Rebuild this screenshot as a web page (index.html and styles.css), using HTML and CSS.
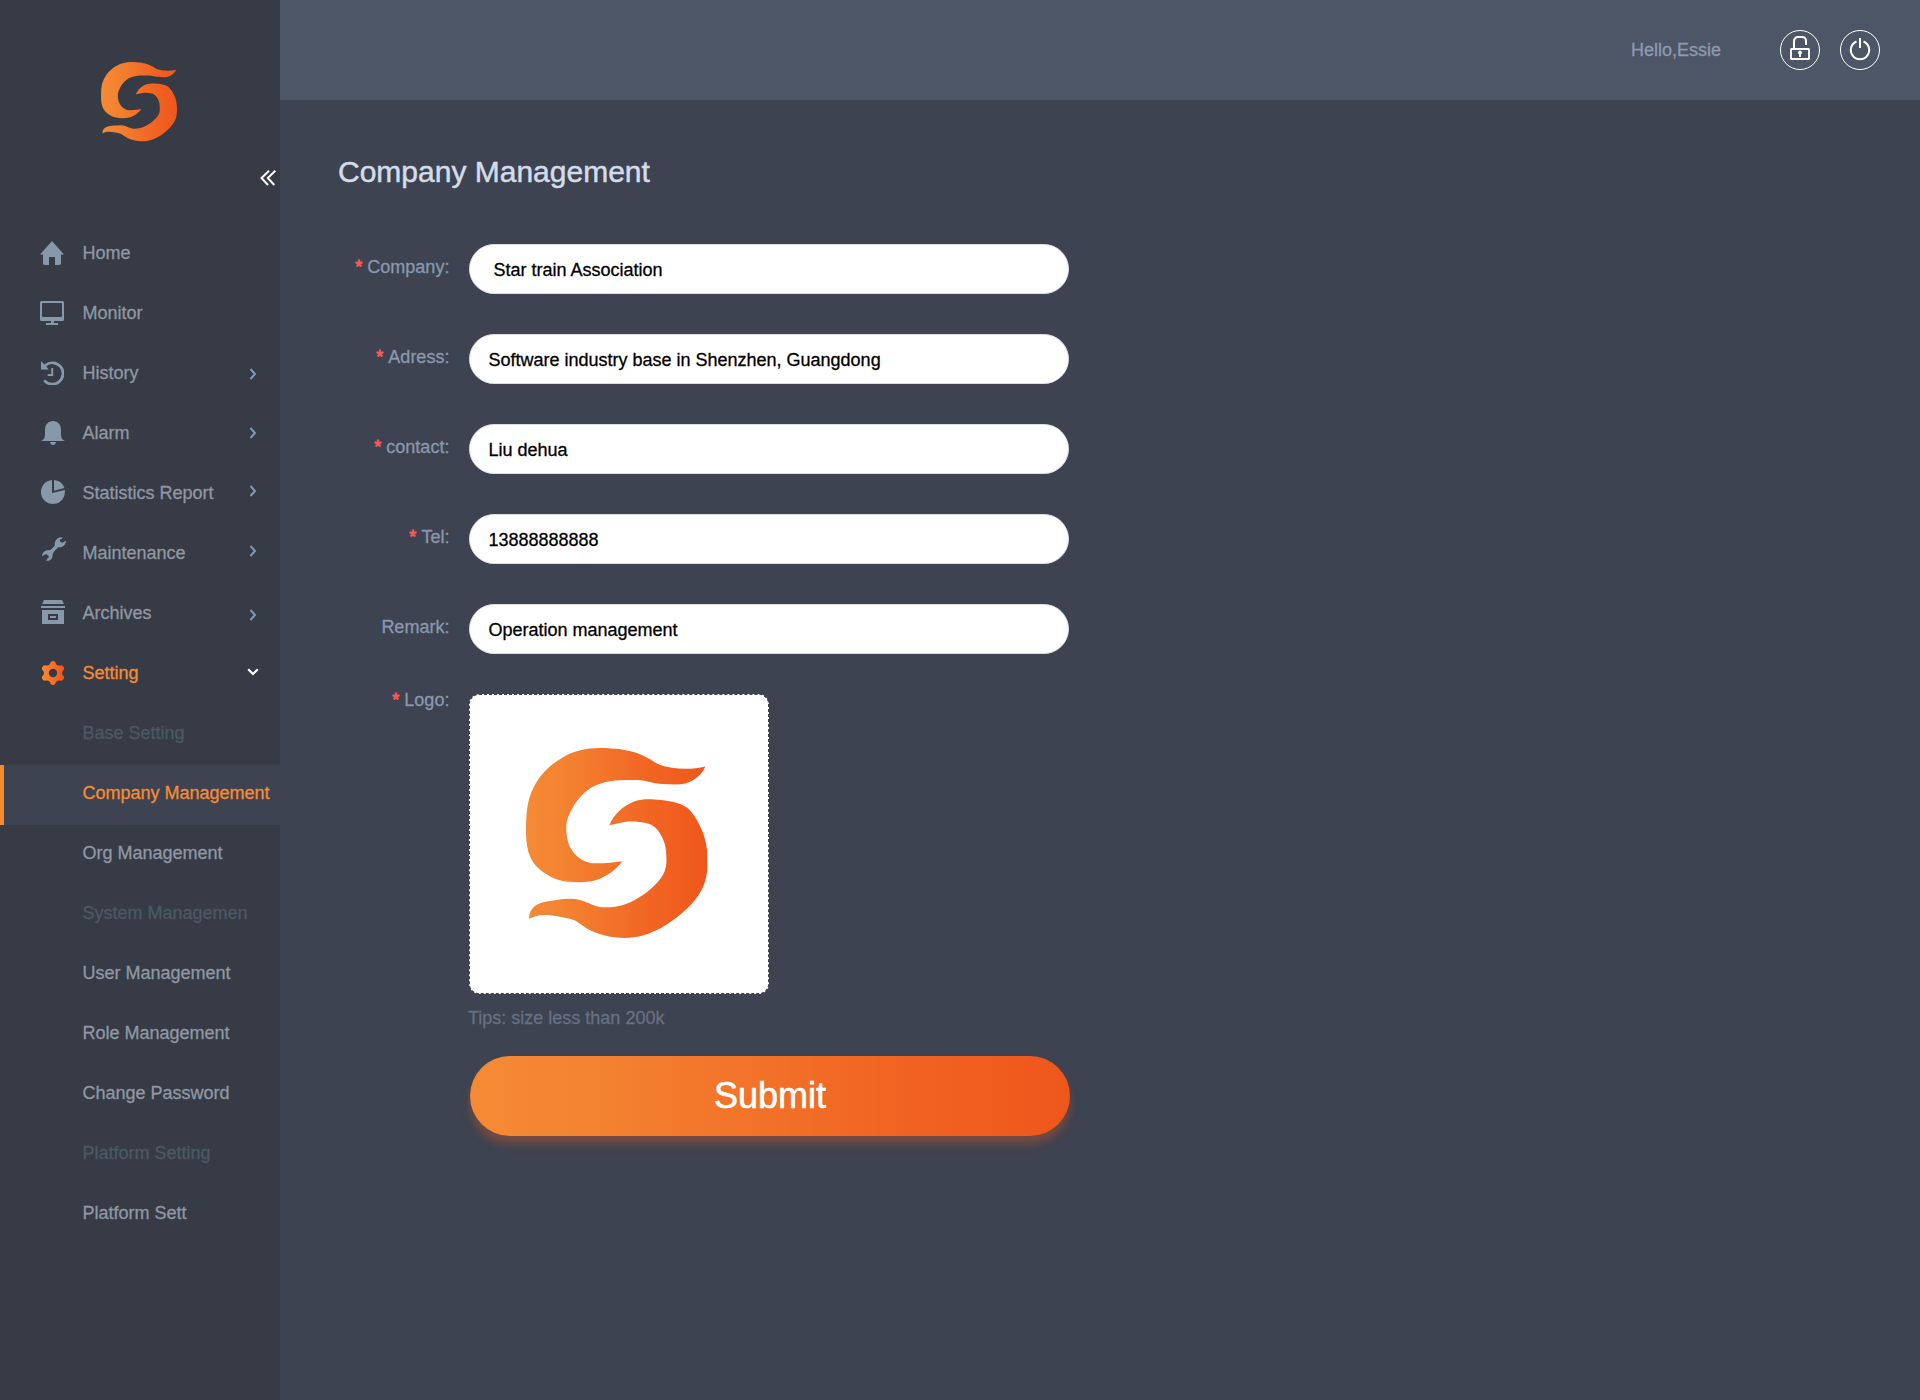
FILE: index.html
```html
<!DOCTYPE html>
<html lang="en">
<head>
<meta charset="utf-8">
<title>Company Management</title>
<link rel="stylesheet" href="styles.css">
</head>
<body>
<svg class="defs" width="0" height="0" aria-hidden="true">
  <defs>
    <linearGradient id="brand" gradientUnits="userSpaceOnUse" x1="260" y1="0" x2="804" y2="0">
      <stop offset="0" stop-color="#f58a35"/><stop offset=".2" stop-color="#f38331"/><stop offset=".7" stop-color="#f16422"/><stop offset="1" stop-color="#ef561b"/>
    </linearGradient>
    <linearGradient id="gear" x1="0" y1="0" x2="1" y2="0">
      <stop offset="0" stop-color="#f68b34"/><stop offset="1" stop-color="#f1541c"/>
    </linearGradient>
    <symbol id="logo" viewBox="260 234 544 569">
      <path fill="url(#brand)" d="M798 289C780 325 748 343 710 343C680 343 655 342 628 335C600 328 580 330 560 330C515 331 475 336 441 363C418 382 403 405 391 430C380 452 380 465 381 485C383 515 390 533 407 552C423 568 438 577 462 579C490 581 520 576 549 573C522 607 490 623 469 630C445 636 415 638 390 635C350 632 315 612 291 588C268 564 261 530 260 490C260 455 261 430 265 405C275 350 310 295 370 262C405 242 440 234 480 234C530 234 570 240 603 253C630 264 645 277 660 284C700 298 755 300 798 289Z"/>
      <path fill="url(#brand)" d="M510 465C522 433 550 407 586 393C605 387 625 387 645 388C680 390 720 396 741 411C765 430 782 465 792 492C802 522 804 545 804 572C804 610 800 632 787 658C765 700 720 741 668 771C630 792 595 803 555 803C515 802 475 793 447 777C430 768 417 754 403 749C380 742 345 734 315 734C295 734 280 739 270 746C268 730 277 713 290 705C303 695 330 692 352 689C375 686 400 684 421 689C445 695 465 709 490 711C520 713 550 708 586 689C620 671 650 645 666 621C677 605 681 592 681 568C681 540 678 515 663 492C650 470 638 462 615 458C595 454 575 453 558 455Z"/>
    </symbol>
    <symbol id="right" viewBox="0 0 8 12"><path d="M1.500 1L6 6L1.500 11" fill="none" stroke="#7a9db5" stroke-width="2"/></symbol>
  </defs>
</svg>
<div class="app">
  <aside class="sidebar">
    <div class="brand">
      <svg class="brand-logo"><use href="#logo"/></svg>
      <svg class="collapse" viewBox="0 0 16 16"><path d="M9 .8L1.500 8L8 15M15.300 .8L7.800 8L14.300 15" fill="none" stroke="#fff" stroke-width="2"/></svg>
    </div>
    <nav class="menu">
      <a class="item"><svg class="icon" viewBox="0 0 24 24"><path d="M12 0L24 13.600H21V22.200Q21 24 19.200 24H15V16H9V24H4.800Q3 24 3 22.200V13.600H0Z"/></svg>Home</a>
      <a class="item"><svg class="icon" viewBox="0 0 24 24"><path fill-rule="evenodd" d="M1.500 0H22.500Q24 0 24 1.500V18.500Q24 20 22.500 20H14V22H18V24H6V22H11V20H1.500Q0 20 0 18.500V1.500Q0 0 1.500 0ZM2 2V16H22V2Z"/></svg>Monitor</a>
      <a class="item"><svg class="icon" viewBox="0 0 24 24"><path d="M1 0L4.400 3.600A12 12 0 1 1 3.200 20.200L5.200 18.400A9.300 9.300 0 1 0 6.200 5.400L8.800 8.500H1ZM11.200 7H13.200V15H7.700V13H11.200Z"/></svg>History<svg class="arrow"><use href="#right"/></svg></a>
      <a class="item alarm"><svg class="icon shift" viewBox="0 0 24 24"><path d="M0 20C3 18.500 4 17 4 13V8.500C4 3.500 7.500 0 12 0S20 3.500 20 8.500V13C20 17 21 18.500 24 20ZM9 21H15Q14.500 24 12 24T9 21Z"/></svg>Alarm<svg class="arrow"><use href="#right"/></svg></a>
      <a class="item stats"><svg class="icon shift" viewBox="0 0 24 24"><path d="M11 0V13L23.800 10.100A12 12 0 1 1 11 0ZM13 0A12 12 0 0 1 23.400 8L13 10.700Z"/></svg>Statistics Report<svg class="arrow"><use href="#right"/></svg></a>
      <a class="item tools"><svg class="icon shift2" viewBox="0 0 24 24"><path d="M21 .7A6.300 6.300 0 0 0 13 8.600C10.500 10.500 9.500 13.500 6.500 13.200C3 12.900 .2 15.600 0 19.200L3.500 17.300Q6.800 17.700 6.900 20L3.800 23.600C7.600 24.600 10.600 22 10.600 18.500C10.500 15 14.500 12.500 16.300 10.300C20 10.800 23.800 8.500 24 3.800L20.300 5.800Q17.800 5.500 17.700 3Z"/></svg>Maintenance<svg class="arrow"><use href="#right"/></svg></a>
      <a class="item archive"><svg class="icon shift" viewBox="0 0 24 24"><path fill-rule="evenodd" d="M3 0H21L23 4H1ZM0 6H24V8H0ZM1 10H23V24H1ZM7 14V20H17V14ZM9 16H15V18H9Z"/></svg>Archives<svg class="arrow"><use href="#right"/></svg></a>
      <a class="item open"><svg class="icon shift" viewBox="0 0 24 24"><path fill="url(#gear)" fill-rule="evenodd" d="M9 3Q9.500 0 12 0T15 3Q16.500 5 19 4.500Q21.500 3.700 23 6.500V8.500Q21 10 21 12T23 15.500V17.500Q21.500 20.300 19 19.500Q16.500 19 15 21Q14.500 24 12 24T9 21Q7.500 19 5 19.500Q2.500 20.300 1 17.500V15.500Q3 14 3 12T1 8.500V6.500Q2.500 3.700 5 4.500Q7.500 5 9 3ZM12 7.800A4.200 4.200 0 1 0 12 16.200A4.200 4.200 0 1 0 12 7.800Z"/></svg>Setting<svg class="down" viewBox="0 0 12 8"><path d="M1.200 1.300L6 6L10.800 1.300" fill="none" stroke="#fff" stroke-width="2.200"/></svg></a>
      <a class="item sub muted">Base Setting</a>
      <a class="item sub active">Company Management</a>
      <a class="item sub">Org Management</a>
      <a class="item sub muted">System Managemen</a>
      <a class="item sub">User Management</a>
      <a class="item sub">Role Management</a>
      <a class="item sub">Change Password</a>
      <a class="item sub muted">Platform Setting</a>
      <a class="item sub">Platform Sett</a>
    </nav>
  </aside>
  <div class="page">
    <header class="topbar">
      <span class="hello">Hello,Essie</span>
      <svg class="round" viewBox="0 0 40 40"><circle cx="20" cy="20" r="19.500"/><g stroke-width="2"><rect x="11" y="19" width="18" height="10" rx=".5"/><path d="M14 18V11.500Q14 7 18.500 7H22Q26 7 26 11V15"/></g><path class="solid" d="M18 22.500A2 2 0 0 1 22 22.500Q22 23.500 21 24V27H19V24Q18 23.500 18 22.500Z"/></svg>
      <svg class="round" viewBox="0 0 40 40"><circle cx="20" cy="20" r="19.500"/><path stroke-width="2" d="M20 8V18M16.500 11.500A9.200 9.200 0 1 0 23.500 11.500"/></svg>
    </header>
    <main class="content">
      <h1 class="title">Company Management</h1>
      <form class="form">
        <div class="row"><label class="label required">Company:</label><div class="field lead">Star train Association</div></div>
        <div class="row"><label class="label required">Adress:</label><div class="field">Software industry base in Shenzhen, Guangdong</div></div>
        <div class="row"><label class="label required">contact:</label><div class="field">Liu dehua</div></div>
        <div class="row"><label class="label required">Tel:</label><div class="field">13888888888</div></div>
        <div class="row"><label class="label">Remark:</label><div class="field">Operation management</div></div>
        <div class="row"><label class="label required logo-label">Logo:</label>
          <div class="upload-group">
            <div class="upload"><svg class="upload-logo"><use href="#logo"/></svg></div>
            <p class="tips">Tips: size less than 200k</p>
            <button class="submit" type="button">Submit</button>
          </div>
        </div>
      </form>
    </main>
  </div>
</div>
</body>
</html>
```
FILE: styles.css
```css
* { box-sizing: border-box; }

body {
  margin: 0;
  background: #3d4350;
  font: 18px "Liberation Sans", Arial, sans-serif;
  -webkit-text-stroke: .3px currentColor;
}

.defs { position: absolute; }

.app {
  display: grid;
  grid-template-columns: 280px 1fr;
  height: 1400px;
}

/* Sidebar */
.sidebar { background: #363b46; }

.brand {
  display: flex;
  flex-direction: column;
  height: 225px;
  padding: 62px 4px 0 101px;
}

.brand-logo { width: 76px; height: 79.5px; }

.collapse {
  align-self: flex-end;
  width: 16px;
  height: 16px;
  margin-top: 28.5px;
}

.item {
  display: flex;
  align-items: center;
  height: 60px;
  padding: 0 23px 4px 40px;
  color: #9097a3;
  white-space: nowrap;
}

.icon {
  flex: none;
  width: 24px;
  height: 24px;
  margin-right: 18.4px;
  fill: #8798a9;
}

.shift { margin-left: 1px; margin-right: 17.4px; }
.shift2 { margin-left: 2px; margin-right: 16.4px; }

.alarm .icon { margin-top: -1px; }
.stats .icon { margin-top: -2px; }
.tools .icon { margin-top: -8px; }
.archive .icon { margin-top: -2px; }

.arrow {
  width: 8px;
  height: 12px;
  margin: 2px 0 0 auto;
}

.alarm .arrow { margin-top: 0; }
.stats .arrow, .tools .arrow { margin-top: -4px; }
.archive .arrow { margin-top: 4px; }

.down {
  width: 12px;
  height: 8px;
  margin: -3px -2px 0 auto;
}

.open { color: #f68b34; }
.sub { padding-left: 82.4px; padding-right: 0; }
.muted { color: #4d5863; }

.active {
  padding-left: 78.4px;
  border-left: 4px solid #f68b34;
  background: #3d4350;
  color: #f68b34;
}

/* Top bar */
.topbar {
  display: flex;
  align-items: center;
  justify-content: flex-end;
  gap: 20px;
  height: 100px;
  padding-right: 40px;
  background: #4d5666;
}

.hello { margin-right: 39px; color: #8d9aae; }

.round {
  width: 40px;
  height: 40px;
  fill: none;
  stroke: #fff;
}

.round .solid { fill: #fff; stroke: none; }

/* Form */
.content { padding: 52px 0 0 58px; }

.title {
  margin: 0;
  color: #d3dce9;
  font-size: 30px;
  font-weight: 400;
  line-height: 40px;
  -webkit-text-stroke-width: .5px;
}

.form {
  display: flex;
  flex-direction: column;
  gap: 40px;
  margin-top: 52px;
}

.row { display: flex; gap: 19.6px; }

.label {
  width: 111.4px;
  color: #8b97af;
  line-height: 46px;
  text-align: right;
}

.required::before {
  content: "*";
  margin-right: 5px;
  color: #ff5858;
  -webkit-text-stroke-width: .8px;
}

.logo-label { line-height: 13px; }

.field {
  width: 600px;
  height: 50px;
  padding-left: 18.4px;
  border: 1px solid #dcdfe6;
  border-radius: 25px;
  background: #fff;
  color: #000;
  line-height: 50px;
}

.lead { padding-left: 23.4px; }

.upload-group { display: flex; flex-direction: column; }

.upload {
  display: flex;
  width: 300px;
  height: 300px;
  padding: 53px 0 0 56.4px;
  border: 1px dashed #3d4350;
  border-radius: 10px;
  background: #fff;
}

.upload-logo { width: 181.5px; height: 190px; }

.tips {
  margin: 13px 0 0 -1px;
  color: #667083;
  line-height: 22px;
}

.submit {
  width: 600px;
  height: 80px;
  margin: 27px 0 0 1px;
  padding: 0;
  border: 0;
  border-radius: 40px;
  background: linear-gradient(90deg, #f58a35, #f38331 20%, #f16422 70%, #ef561b);
  box-shadow: 0 8px 10px rgba(241, 90, 30, .32);
  color: #fff;
  font: 36px "Liberation Sans", Arial, sans-serif;
  -webkit-text-stroke: .6px #fff;
}
```
